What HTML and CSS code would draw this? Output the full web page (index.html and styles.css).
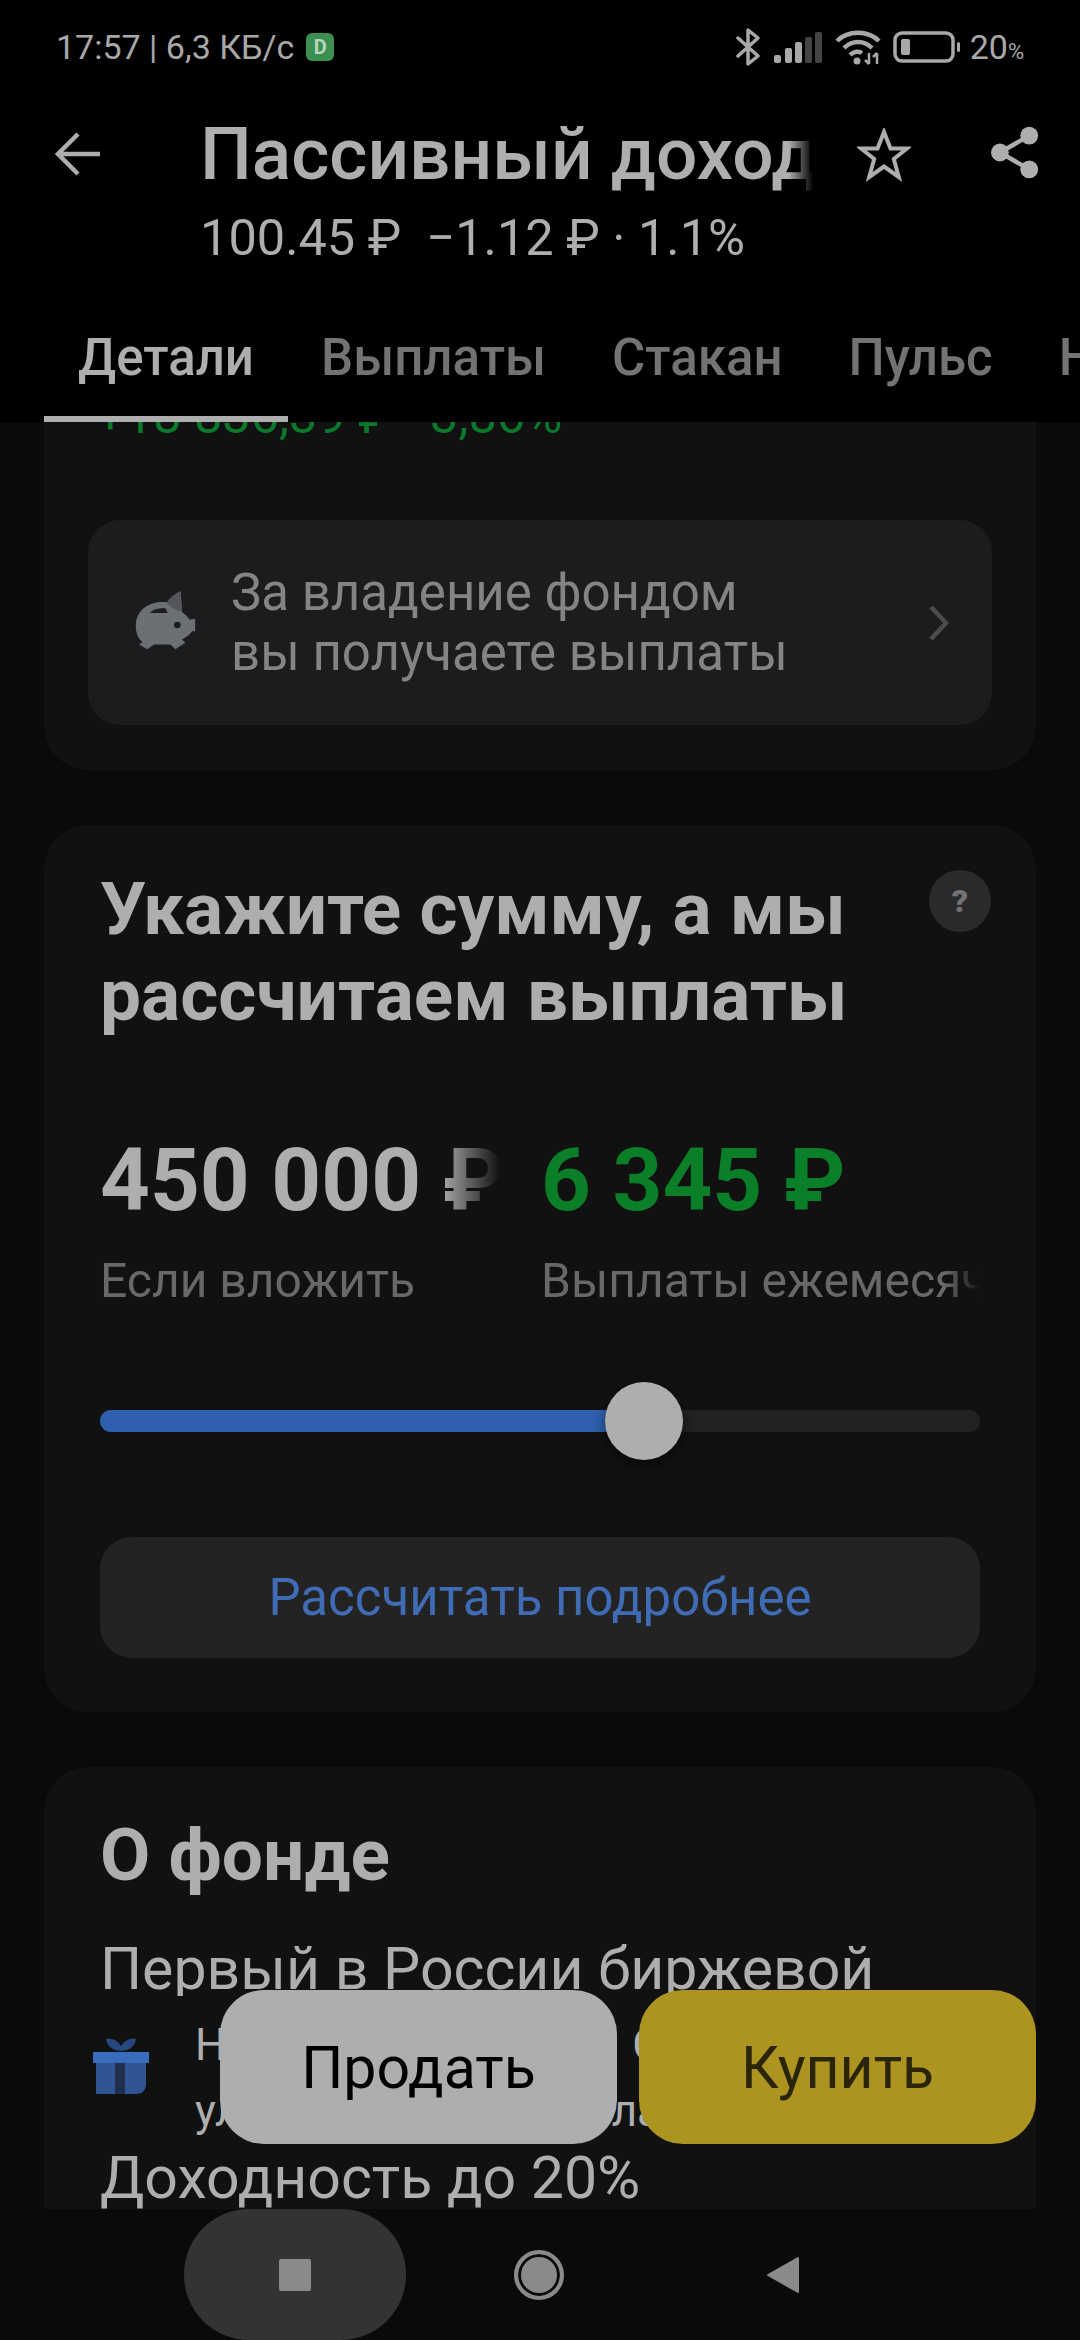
FILE: index.html
```html
<!DOCTYPE html>
<html lang="ru">
<head>
    <meta charset="UTF-8">
    <title>Пассивный доход</title>
    <link rel="stylesheet" href="styles.css">
</head>
<body>

<div class="screen">
    <header class="top">
        <div class="status">
            <div class="status-left">
                <span>17:57 | 6,3 КБ/с</span>
                <span class="app-badge">D</span>
            </div>
            <div class="status-right">
                <svg width="26" height="38" viewBox="0 0 26 38" fill="none" stroke="#a8a8a8" stroke-width="3.5" stroke-linejoin="round" stroke-linecap="round"><path d="M3 10l20 18-10 8V2l10 8L3 28"/></svg>
                <svg width="50" height="32" viewBox="0 0 50 32"><rect x="1" y="24" width="7" height="8" rx="2" fill="#a8a8a8"/><rect x="12" y="17" width="7" height="15" rx="2" fill="#a8a8a8"/><rect x="22" y="11" width="7" height="21" rx="2" fill="#a8a8a8"/><rect x="32" y="6" width="7" height="26" rx="2" fill="#444"/><rect x="42" y="1" width="7" height="31" rx="2" fill="#444"/></svg>
                <svg width="46" height="36" viewBox="0 0 46 36" fill="none" stroke="#a8a8a8" stroke-width="4.5"><path d="M2 12C13 1 33 1 44 12"/><path d="M9 19C17 11 29 11 37 19"/><path d="M15 26c4-4 9-4 12-2"/><circle cx="22" cy="32" r="3.500" fill="#a8a8a8" stroke="none"/><path d="M34 24v11M30 31l4 4M42 35V24M38 28l4-4" stroke-width="2.500"/></svg>
                <svg width="68" height="32" viewBox="0 0 68 32"><rect x="2" y="2" width="58" height="28" rx="7" fill="none" stroke="#a8a8a8" stroke-width="3.5"/><rect x="8" y="8" width="9" height="16" rx="2" fill="#a8a8a8"/><rect x="64" y="11" width="3" height="10" rx="1.5" fill="#a8a8a8"/></svg>
                <span class="battery">20<small>%</small></span>
            </div>
        </div>

        <div class="titlebar">
            <svg class="back" width="46" height="44" viewBox="0 0 46 44" fill="none" stroke="#aeaeae" stroke-width="4.5"><path d="M46 22H4M24 2L4 22l20 20"/></svg>
            <div class="title-block">
                <div class="title">Пассивный доход</div>
                <div class="subtitle">100.45 ₽&nbsp; −1.12 ₽ · 1.1%</div>
            </div>
            <svg class="star" width="54" height="54" viewBox="0 0 54 54" fill="none" stroke="#aeaeae" stroke-width="4"><path d="M27 4l6.500 16.500H50L36.800 31l5 18L27 38.500 12.200 49l5-18L4 20.500h16.500z"/></svg>
            <svg class="share" width="48" height="55" viewBox="0 0 54 58" fill="#aeaeae"><circle cx="43" cy="10" r="10"/><circle cx="10" cy="29" r="10"/><circle cx="43" cy="48" r="10"/><path d="M43 10L10 29l33 19" fill="none" stroke="#aeaeae" stroke-width="5"/></svg>
        </div>

        <nav class="tabs">
            <a class="tab active">Детали</a>
            <a class="tab">Выплаты</a>
            <a class="tab">Стакан</a>
            <a class="tab">Пульс</a>
            <a class="tab">Новости</a>
        </nav>
    </header>

    <main class="content">
        <div class="scroll">
            <section class="card card-first">
                <div class="gain">+18 836,39 ₽ · 3,86%</div>
                <a class="banner">
                    <svg class="piggy" width="63" height="61" viewBox="70 90 190 185">
                        <path d="M168 127C130 122 78 140 75 195c-1 30 10 45 20 53l-10 7 25 15 20-15h50l15 15 30-20-10-10c15-8 25-15 30-25h10v-38l-17 3c-6-10-16-18-23-23l-4-62c-16 7-31 19-43 34z" fill="#6c6f74"/>
                        <path d="M168 127c12-15 27-27 43-34l4 62c-16-2-35-12-47-28z" fill="#54565a"/>
                        <path d="M118 160c7-10 17-15 47-15l7 15z" fill="#1c1c1e"/>
                        <circle cx="201" cy="196" r="10" fill="#1c1c1e"/>
                    </svg>
                    <span class="banner-text">За владение фондом<br>вы получаете выплаты</span>
                    <svg class="chevron" width="22" height="36" viewBox="0 0 22 36" fill="none" stroke="#4c4c4e" stroke-width="4.500"><path d="M3 2l15 16L3 34"/></svg>
                </a>
            </section>

            <section class="card card-calc">
                <div class="calc-head">
                    <h2>Укажите сумму, а мы рассчитаем выплаты</h2>
                    <span class="help">?</span>
                </div>
                <div class="calc-values">
                    <div class="value-col value-col-left">
                        <div class="amount">450 000 ₽</div>
                        <div class="value-label">Если вложить</div>
                    </div>
                    <div class="value-col value-col-right">
                        <div class="amount amount-green">6 345 ₽</div>
                        <div class="value-label">Выплаты ежемесячно</div>
                    </div>
                </div>
                <div class="slider">
                    <div class="slider-fill"></div>
                    <div class="slider-thumb"></div>
                </div>
                <a class="calc-button">Рассчитать подробнее</a>
            </section>

            <section class="card card-about">
                <h2>О фонде</h2>
                <p class="about-text">Первый в России биржевой</p>
                <div class="promo">
                    <svg class="gift" width="56" height="56" viewBox="0 0 56 56">
                        <path d="M28 13C21 13 14 9 13 1c5-2 12 2 15 7 3-5 10-9 15-7-1 8-8 12-15 12z" fill="#27477f"/>
                        <path d="M3 25h50v21c0 6-4 10-10 10H3z" fill="#2f5595"/>
                        <rect x="0" y="14" width="56" height="11" fill="#3a6cbd"/>
                        <rect x="22" y="25" width="10" height="31" fill="#1e2f4f"/>
                    </svg>
                    <div class="promo-lines">
                        <div class="promo-line"><span>НД</span><span>С</span></div>
                        <div class="promo-line"><span>ул</span><span>ла</span></div>
                    </div>
                </div>
                <p class="about-text">Доходность до 20%</p>
            </section>
        </div>

        <div class="actions">
            <a class="action action-sell">Продать</a>
            <a class="action action-buy">Купить</a>
        </div>
    </main>

    <footer class="navbar">
        <div class="nav-item nav-item-active"><span class="nav-square"></span></div>
        <div class="nav-item"><span class="nav-circle"></span></div>
        <div class="nav-item"><svg width="34" height="36" viewBox="0 0 34 36"><path d="M32 1v34L2 18z" fill="#8a8a8a" stroke="#8a8a8a" stroke-width="2" stroke-linejoin="round"/></svg></div>
    </footer>
</div>

</body>
</html>
```

FILE: styles.css
```css
* {
    box-sizing: border-box;
}
html, body {
    margin: 0;
    background: #0a0a0a;
}
body {
    font-family: Roboto, "Noto Sans", sans-serif;
}
.screen {
    width: 1080px;
    height: 2340px;
    display: flex;
    flex-direction: column;
    overflow: hidden;
}

/* header */
.top {
    height: 422px;
    background: #000;
    flex: none;
}
.status {
    height: 94px;
    padding: 0 56px;
    display: flex;
    justify-content: space-between;
    align-items: center;
    color: #a8a8a8;
    font-size: 34px;
}
.status-left {
    display: flex;
    align-items: center;
    gap: 12px;
}
.app-badge {
    width: 28px;
    height: 28px;
    border-radius: 6px;
    background: #3c8f50;
    color: #b5d8bf;
    font-size: 20px;
    font-weight: 700;
    display: flex;
    align-items: center;
    justify-content: center;
}
.status-right {
    display: flex;
    align-items: center;
    gap: 12px;
}
.battery {
    margin-left: -3px;
}
.battery small {
    font-size: 22px;
}
.titlebar {
    height: 176px;
    display: flex;
    align-items: flex-start;
}
.back {
    margin: 38px 0 0 54px;
    flex: none;
}
.title-block {
    margin-left: 100px;
    width: 613px;
    flex: none;
}
.title {
    margin-top: 20px;
    font-size: 73px;
    line-height: 80px;
    font-weight: 500;
    color: #aeaeae;
    white-space: nowrap;
    overflow: hidden;
    -webkit-mask-image: linear-gradient(to right, #000 96%, transparent);
    mask-image: linear-gradient(to right, #000 96%, transparent);
}
.subtitle {
    margin-top: 16px;
    font-size: 50.500px;
    line-height: 56px;
    color: #aeaeae;
    white-space: nowrap;
}
.star {
    margin: 34px 0 0 44px;
    flex: none;
}
.share {
    margin: 31px 0 0 80px;
    flex: none;
}
.tabs {
    height: 152px;
    padding: 0 0 0 44px;
    display: flex;
    white-space: nowrap;
    overflow: hidden;
}
.tab {
    padding: 58px 33px 0;
    font-size: 51px;
    line-height: 60px;
    font-weight: 500;
    color: #737373;
    height: 152px;
    flex: none;
}
.tab.active {
    color: #aeaeae;
    border-bottom: 6px solid #aeaeae;
    padding: 58px 34px 0;
}

/* scrolling part */
.content {
    flex: 1;
    position: relative;
    overflow: hidden;
}
.scroll {
    margin: -96px 44px 0;
    display: flex;
    flex-direction: column;
    gap: 55px;
}
.card {
    background: #111112;
    border-radius: 44px;
}
.card h2 {
    margin: 0;
    color: #aeaeae;
    font-weight: 700;
}
.card-first {
    padding: 62px 44px 45px;
}
.gain {
    font-size: 50.500px;
    line-height: 56px;
    color: #0a7a2a;
    padding-left: 8px;
    white-space: nowrap;
}
.banner {
    margin-top: 76px;
    height: 205px;
    background: #1c1c1e;
    border-radius: 32px;
    display: flex;
    align-items: center;
    padding: 0 42px 0 46px;
}
.piggy {
    flex: none;
    margin-top: -4px;
}
.banner-text {
    flex: 1;
    margin-left: 34px;
    font-size: 51px;
    line-height: 60px;
    color: #848484;
}
.card-calc {
    height: 887px;
    padding: 41px 56px 0;
}
.calc-head {
    display: flex;
    justify-content: space-between;
}
.calc-head h2 {
    width: 800px;
    font-size: 73px;
    line-height: 86px;
}
.help {
    width: 62px;
    height: 62px;
    margin: 4px -11px 0 0;
    border-radius: 50%;
    background: #2a2a2c;
    color: #737373;
    font-size: 32px;
    font-weight: 900;
    display: flex;
    align-items: center;
    justify-content: center;
}
.calc-values {
    margin-top: 92px;
    display: flex;
}
.value-col {
    overflow: hidden;
    white-space: nowrap;
    flex: none;
}
.value-col-left {
    width: 400px;
    -webkit-mask-image: linear-gradient(to right, #000 85%, transparent);
    mask-image: linear-gradient(to right, #000 85%, transparent);
}
.value-col-right {
    width: 440px;
    margin-left: 41px;
    -webkit-mask-image: linear-gradient(to right, #000 92%, transparent);
    mask-image: linear-gradient(to right, #000 92%, transparent);
}
.amount {
    font-size: 87px;
    line-height: 100px;
    font-weight: 700;
    color: #aeaeae;
}
.amount-green {
    color: #0a7f27;
}
.value-label {
    margin-top: 23px;
    font-size: 48px;
    line-height: 56px;
    color: #666869;
}
.slider {
    margin-top: 101px;
    height: 22px;
    border-radius: 11px;
    background: #222224;
    position: relative;
}
.slider-fill {
    width: 520px;
    height: 100%;
    border-radius: 11px 0 0 11px;
    background: #2f5fae;
}
.slider-thumb {
    position: absolute;
    left: 505px;
    top: -28px;
    width: 78px;
    height: 78px;
    border-radius: 50%;
    background: #aeaeae;
    box-shadow: 0 6px 14px rgba(0, 0, 0, 0.5);
}
.calc-button {
    margin-top: 105px;
    height: 121px;
    border-radius: 32px;
    background: #232324;
    color: #3f6cb5;
    font-size: 51px;
    display: flex;
    align-items: center;
    justify-content: center;
}
.card-about {
    padding: 48px 56px 0;
    height: 600px;
}
.card-about h2 {
    font-size: 73px;
    line-height: 80px;
}
.about-text {
    margin: 0;
    font-size: 59px;
    line-height: 70px;
    color: #aeaeae;
    white-space: nowrap;
}
.card-about h2 + .about-text {
    margin-top: 39px;
    height: 62px;
    overflow: hidden;
}
.promo {
    margin: 0 -56px;
    padding: 0 0 0 49px;
    height: 147px;
    background: #111112;
    display: flex;
    align-items: flex-start;
}
.gift {
    flex: none;
    margin-top: 42px;
}
.promo-lines {
    margin: 16px 0 0 46px;
    width: 466px;
}
.promo-line {
    display: flex;
    justify-content: space-between;
    font-size: 44px;
    line-height: 66px;
    color: #aeaeae;
}

/* buy and sell, float over the text */
.actions {
    position: absolute;
    right: 44px;
    bottom: 65px;
    display: flex;
    gap: 22px;
}
.action {
    width: 397px;
    height: 154px;
    border-radius: 44px;
    font-size: 59px;
    display: flex;
    align-items: center;
    justify-content: center;
}
.action-sell {
    background: #aeaeae;
    color: #000;
}
.action-buy {
    background: #ad931f;
    color: #2a2408;
}

/* android buttons */
.navbar {
    height: 131px;
    flex: none;
    background: #0a0a0a;
    padding-left: 184px;
    display: flex;
}
.nav-item {
    width: 222px;
    display: flex;
    align-items: center;
    justify-content: center;
    margin-right: 22px;
}
.nav-item-active {
    background: #333;
    border-radius: 65px;
}
.nav-square {
    width: 32px;
    height: 32px;
    border-radius: 2px;
    background: #8a8a8a;
}
.nav-circle {
    width: 50px;
    height: 50px;
    border-radius: 50%;
    background: #8a8a8a;
    border: 4px solid #8a8a8a;
    box-shadow: inset 0 0 0 3px #0a0a0a;
}
```
